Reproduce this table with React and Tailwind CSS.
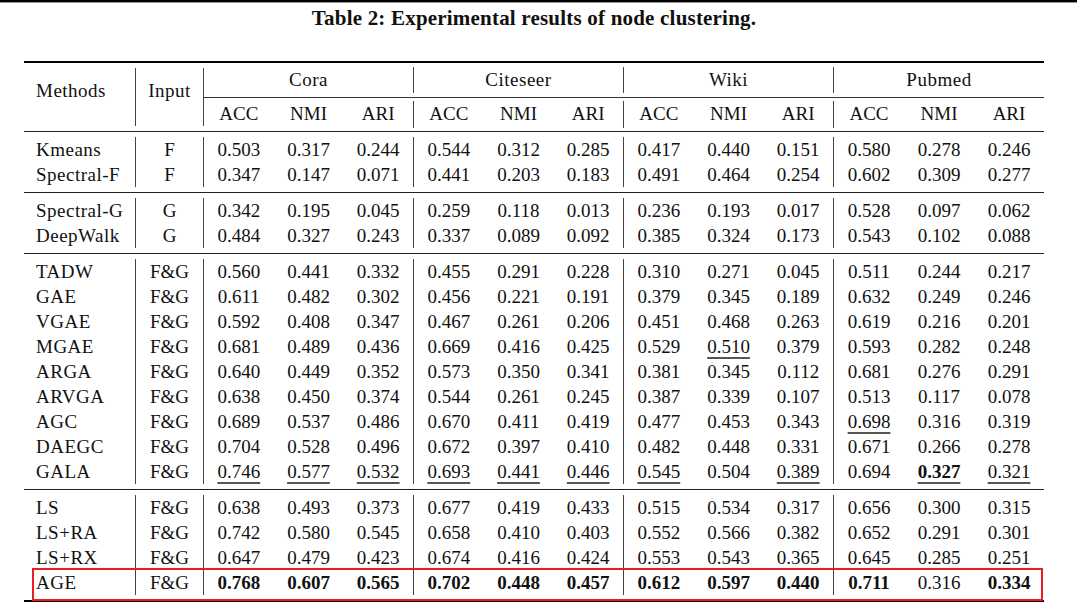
const datasets = ['Cora', 'Citeseer', 'Wiki', 'Pubmed'];
const metrics = ['ACC', 'NMI', 'ARI'];

// '*' prefix = bold, '_' suffix = underlined (second best)
const groups = [
  [
    ['Kmeans', 'F', '0.503 0.317 0.244 0.544 0.312 0.285 0.417 0.440 0.151 0.580 0.278 0.246'],
    ['Spectral-F', 'F', '0.347 0.147 0.071 0.441 0.203 0.183 0.491 0.464 0.254 0.602 0.309 0.277'],
  ],
  [
    ['Spectral-G', 'G', '0.342 0.195 0.045 0.259 0.118 0.013 0.236 0.193 0.017 0.528 0.097 0.062'],
    ['DeepWalk', 'G', '0.484 0.327 0.243 0.337 0.089 0.092 0.385 0.324 0.173 0.543 0.102 0.088'],
  ],
  [
    ['TADW', 'F&G', '0.560 0.441 0.332 0.455 0.291 0.228 0.310 0.271 0.045 0.511 0.244 0.217'],
    ['GAE', 'F&G', '0.611 0.482 0.302 0.456 0.221 0.191 0.379 0.345 0.189 0.632 0.249 0.246'],
    ['VGAE', 'F&G', '0.592 0.408 0.347 0.467 0.261 0.206 0.451 0.468 0.263 0.619 0.216 0.201'],
    ['MGAE', 'F&G', '0.681 0.489 0.436 0.669 0.416 0.425 0.529 0.510_ 0.379 0.593 0.282 0.248'],
    ['ARGA', 'F&G', '0.640 0.449 0.352 0.573 0.350 0.341 0.381 0.345 0.112 0.681 0.276 0.291'],
    ['ARVGA', 'F&G', '0.638 0.450 0.374 0.544 0.261 0.245 0.387 0.339 0.107 0.513 0.117 0.078'],
    ['AGC', 'F&G', '0.689 0.537 0.486 0.670 0.411 0.419 0.477 0.453 0.343 0.698_ 0.316 0.319'],
    ['DAEGC', 'F&G', '0.704 0.528 0.496 0.672 0.397 0.410 0.482 0.448 0.331 0.671 0.266 0.278'],
    ['GALA', 'F&G', '0.746_ 0.577_ 0.532_ 0.693_ 0.441_ 0.446_ 0.545_ 0.504 0.389_ 0.694 *0.327_ 0.321_'],
  ],
  [
    ['LS', 'F&G', '0.638 0.493 0.373 0.677 0.419 0.433 0.515 0.534 0.317 0.656 0.300 0.315'],
    ['LS+RA', 'F&G', '0.742 0.580 0.545 0.658 0.410 0.403 0.552 0.566 0.382 0.652 0.291 0.301'],
    ['LS+RX', 'F&G', '0.647 0.479 0.423 0.674 0.416 0.424 0.553 0.543 0.365 0.645 0.285 0.251'],
    ['AGE', 'F&G', '*0.768 *0.607 *0.565 *0.702 *0.448 *0.457 *0.612 *0.597 *0.440 *0.711 0.316 *0.334', true],
  ],
];

const Value = ({ raw }) => {
  const bold = raw.startsWith('*');
  const under = raw.endsWith('_');
  const text = raw.replace('*', '').replace('_', '');
  return (
    <span
      className={`${bold ? 'font-bold' : ''} ${
        under ? 'underline decoration-[#555] decoration-[1.5px] underline-offset-[4px]' : ''
      }`}
    >
      {text}
    </span>
  );
};

const Row = ({ name, input, values, highlight }) => {
  const vals = values.split(' ');
  return (
    <div className="relative flex h-[25px] leading-[25px]">
      <div className="w-[112px] shrink-0 border-r border-[#444] pl-[12px] tracking-[0.5px]">{name}</div>
      <div className="w-[68px] shrink-0 border-r border-[#444] text-center">{input}</div>
      {[0, 1, 2, 3].map((g) => (
        <div key={g} className={`flex w-[210px] shrink-0 ${g < 3 ? 'border-r border-[#444]' : ''}`}>
          {[0, 1, 2].map((m) => (
            <div key={m} className="w-[70px] text-center">
              <Value raw={vals[g * 3 + m]} />
            </div>
          ))}
        </div>
      ))}
      {highlight && (
        <div className="pointer-events-none absolute left-[8px] top-[-2px] h-[33px] w-[1011px] border-2 border-[#ec1c24]" />
      )}
    </div>
  );
};

export default function App() {
  return (
    <div className="h-[606px] w-[1077px] overflow-hidden bg-white font-['Liberation_Serif',serif] text-[19px] text-[#111]">
      <div className="h-[2px] bg-black" />
      <div className="h-[1px] bg-[#999]" />

      <div className="ml-[24px] w-[1020px]">
        <div className="flex h-[32px] items-center justify-center text-[21px] font-bold tracking-[0.2px]">
          Table 2: Experimental results of node clustering.
        </div>

        <div className="mt-[26px] h-[2px] bg-black" />

        {/* header */}
        <div className="flex h-[68px]">
          <div className="w-[112px] shrink-0 py-[5px]">
            <div className="flex h-full items-center border-r border-[#444] pb-[12px] pl-[12px] tracking-[0.5px]">
              Methods
            </div>
          </div>
          <div className="w-[68px] shrink-0 py-[5px]">
            <div className="flex h-full items-center justify-center border-r border-[#444] pb-[12px] tracking-[0.5px]">
              Input
            </div>
          </div>
          <div className="flex flex-1 flex-col">
            <div className="flex h-[34px] py-[4px]">
              {datasets.map((d, i) => (
                <div
                  key={d}
                  className={`flex w-[210px] items-center justify-center tracking-[0.5px] ${
                    i < 3 ? 'border-r border-[#444]' : ''
                  }`}
                >
                  {d}
                </div>
              ))}
            </div>
            <div className="h-[1px] bg-[#333]" />
            <div className="flex h-[33px] py-[3px]">
              {datasets.map((d, i) => (
                <div key={d} className={`flex w-[210px] ${i < 3 ? 'border-r border-[#444]' : ''}`}>
                  {metrics.map((m) => (
                    <div key={m} className="flex w-[70px] items-center justify-center">
                      {m}
                    </div>
                  ))}
                </div>
              ))}
            </div>
          </div>
        </div>

        {groups.map((rows, gi) => (
          <div key={gi}>
            <div className="h-[1px] bg-[#222]" />
            <div className="py-[5px]">
              {rows.map(([name, input, values, hl]) => (
                <Row key={name} name={name} input={input} values={values} highlight={hl} />
              ))}
            </div>
          </div>
        ))}
        <div className="h-[2px] bg-black" />
      </div>
    </div>
  );
}
